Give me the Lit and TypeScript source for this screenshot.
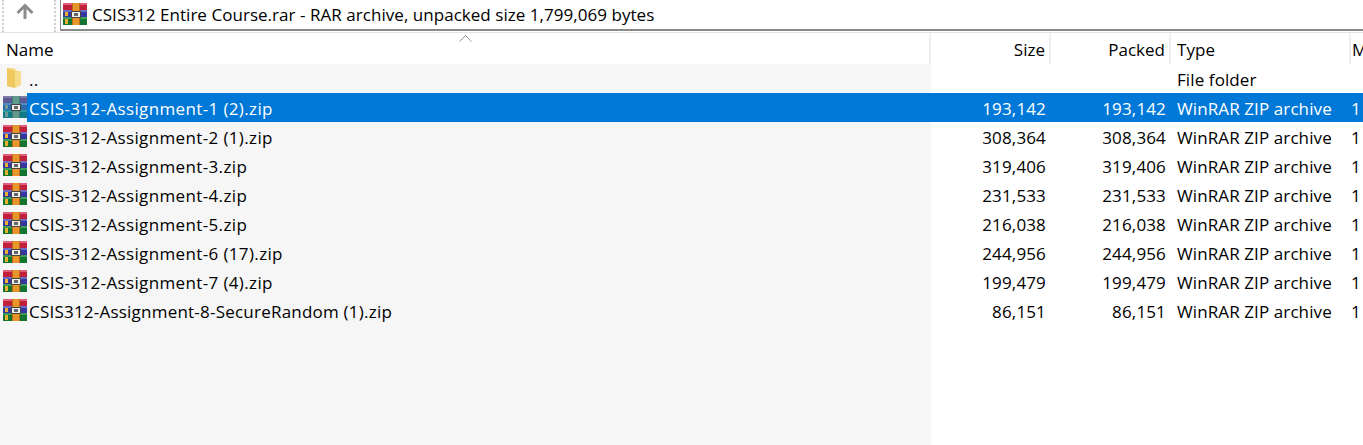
import { LitElement, html, css, svg } from "lit";
import { customElement } from "lit/decorators.js";

const files = [
  ["CSIS-312-Assignment-1 (2).zip", "193,142"],
  ["CSIS-312-Assignment-2 (1).zip", "308,364"],
  ["CSIS-312-Assignment-3.zip", "319,406"],
  ["CSIS-312-Assignment-4.zip", "231,533"],
  ["CSIS-312-Assignment-5.zip", "216,038"],
  ["CSIS-312-Assignment-6 (17).zip", "244,956"],
  ["CSIS-312-Assignment-7 (4).zip", "199,479"],
  ["CSIS312-Assignment-8-SecureRandom (1).zip", "86,151"],
];

// three stacked books with a belt, the WinRAR icon
const rarIcon = (muted = false) => {
  const c = muted
    ? { top: "#5d5a92", topHi: "#7d7aa8", mid: "#2f6aa8", midHi: "#4f8ac0", low: "#127a86", lowHi: "#2f96a0", tab: "#6f9a9a", belt: "#5f9a8c", beltDark: "#3f7a78" }
    : { top: "#c0203c", topHi: "#e0607a", mid: "#35379e", midHi: "#6a6cc8", low: "#13742f", lowHi: "#3f9c58", tab: "#eeb030", belt: "#e8962c", beltDark: "#b86c14" };
  return html`<svg class="rar" width="24" height="22" viewBox="0 0 24 22">
    ${svg`
      <rect x="0" y="0" width="24" height="7" fill=${c.top} />
      <rect x="0" y="0" width="24" height="2" fill=${c.topHi} />
      <rect x="0" y="7" width="24" height="7" fill=${c.mid} />
      <rect x="0" y="7" width="24" height="2" fill=${c.midHi} />
      <rect x="0" y="14" width="24" height="8" fill=${c.low} />
      <rect x="0" y="14" width="24" height="2" fill=${c.lowHi} />
      <rect x="2" y="9" width="3" height="4" fill=${c.tab} />
      <rect x="2" y="16" width="3" height="5" fill=${c.tab} />
      <rect x="9" y="0" width="8" height="22" fill=${c.beltDark} />
      <rect x="10" y="0" width="6" height="22" fill=${c.belt} />
      <rect x="8.5" y="8.5" width="9" height="6" fill="#eeeeee" stroke="#444" stroke-width="1" />
      <rect x="11" y="10" width="4" height="3" fill="#666" />
    `}
  </svg>`;
};

@customElement("app-root")
export class AppRoot extends LitElement {
  static styles = css`
    :host {
      display: block;
      height: 445px;
      overflow: hidden;
      background: #fff;
      font-family: "Open Sans", "Noto Sans", sans-serif;
      font-size: 17px;
      color: #000;
    }

    .top {
      display: flex;
      height: 33px;
      border-bottom: 1px solid #e3e3e3;
      box-sizing: border-box;
    }

    .up {
      width: 54px;
      margin-left: 2px;
      margin-right: 4px;
      padding: 2px 0 0 12px;
      box-sizing: border-box;
      border-left: 2px dotted #cfcfcf;
      border-right: 2px dotted #cfcfcf;
    }

    .address {
      flex: 1;
      height: 31px;
      box-sizing: border-box;
      border-left: 1px solid #8a8a8a;
      border-bottom: 2px solid #8a8a8a;
      display: flex;
      align-items: flex-start;
      gap: 5px;
      padding: 3px 0 0 2px;
    }

    .address span {
      letter-spacing: 0.04px;
      line-height: 24px;
    }

    .head {
      display: grid;
      grid-template-columns: 931px 120px 120px 180px 1fr;
      height: 31px;
    }

    .head > div {
      display: flex;
      align-items: center;
      box-sizing: border-box;
      padding-top: 2px;
      border-right: 2px solid #efefef;
    }

    .head .name {
      padding-left: 6px;
      position: relative;
    }

    .head .sort {
      position: absolute;
      left: 459px;
      top: 2px;
    }

    .head .num {
      justify-content: flex-end;
      padding-right: 4px;
      letter-spacing: 0;
    }

    .head .type {
      padding-left: 6px;
    }

    .head .mod {
      border-right: none;
      padding-left: 1px;
    }

    .body {
      height: 381px;
      background: linear-gradient(to right, #f6f6f6 931px, #fff 931px);
    }

    .row {
      display: grid;
      grid-template-columns: 931px 120px 120px 180px 1fr;
      height: 29px;
      box-sizing: border-box;
      padding-top: 2px;
      align-items: center;
      white-space: nowrap;
    }

    .row .name {
      display: flex;
      align-items: center;
      height: 100%;
    }

    .icon {
      width: 27px;
      padding-left: 3px;
      margin-top: 1px;
      align-self: flex-start;
      box-sizing: border-box;
      flex: none;
      display: flex;
    }

    .label {
      padding-left: 2px;
      letter-spacing: 0.36px;
    }

    .label.long {
      letter-spacing: 0.22px;
    }

    .num {
      text-align: right;
      padding-right: 5px;
      letter-spacing: 0.15px;
    }

    .type {
      padding-left: 6px;
      letter-spacing: 0.1px;
    }

    .selected {
      color: #fff;
      background: linear-gradient(to right, transparent 27px, #0078d7 27px);
    }

    .rar {
      display: block;
      flex: none;
    }
  `;

  render() {
    return html`
      <div class="top">
        <div class="up">
          <svg width="18" height="17" viewBox="0 0 18 17">
            <path d="M9 16V3M1.5 10L9 2.5l7.5 7.5" fill="none" stroke="#8c8c8c" stroke-width="3" />
          </svg>
        </div>
        <div class="address">
          ${rarIcon()}
          <span>CSIS312 Entire Course.rar - RAR archive, unpacked size 1,799,069 bytes</span>
        </div>
      </div>
      <div class="head">
        <div class="name">
          Name
          <svg class="sort" width="13" height="7" viewBox="0 0 13 7">
            <path d="M0.5 6.5L6.5 0.5l6 6" fill="none" stroke="#8f8f8f" />
          </svg>
        </div>
        <div class="num">Size</div>
        <div class="num">Packed</div>
        <div class="type">Type</div>
        <div class="mod">M</div>
      </div>
      <div class="body">
        <div class="row">
          <div class="name">
            <span class="icon">
              <svg width="24" height="22" viewBox="0 0 24 22">
                <path d="M4 1h7l3 3h4v14l-6 3-8-2z" fill="#f7dc8c" />
                <path d="M4 1l8 3v17l-8-2z" fill="#f0c860" />
              </svg>
            </span>
            <span class="label">..</span>
          </div>
          <div></div>
          <div></div>
          <div class="type">File folder</div>
          <div></div>
        </div>
        ${files.map(
          ([name, size], i) => html`
            <div class="row ${i == 0 ? "selected" : ""}">
              <div class="name">
                <span class="icon">${rarIcon(i == 0)}</span>
                <span class="label ${name.length > 35 ? "long" : ""}">${name}</span>
              </div>
              <div class="num">${size}</div>
              <div class="num">${size}</div>
              <div class="type">WinRAR ZIP archive</div>
              <div>1</div>
            </div>
          `
        )}
      </div>
    `;
  }
}
